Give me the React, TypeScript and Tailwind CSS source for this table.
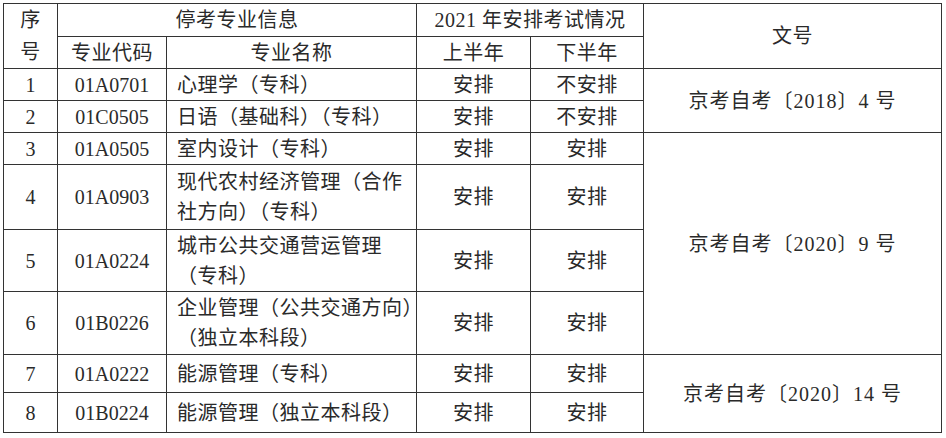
import React from "react";

type Row = {
  no: string;
  code: string;
  name: React.ReactNode;
  first: string;
  second: string;
  h: string;
};

const rows: Row[] = [
  { no: "1", code: "01A0701", name: "心理学（专科）", first: "安排", second: "不安排", h: "h-[32px]" },
  { no: "2", code: "01C0505", name: "日语（基础科）（专科）", first: "安排", second: "不安排", h: "h-[32px]" },
  { no: "3", code: "01A0505", name: "室内设计（专科）", first: "安排", second: "安排", h: "h-[32px]" },
  {
    no: "4",
    code: "01A0903",
    name: (
      <>
        现代农村经济管理（合作
        <br />
        社方向）（专科）
      </>
    ),
    first: "安排",
    second: "安排",
    h: "h-[65px]",
  },
  {
    no: "5",
    code: "01A0224",
    name: (
      <>
        城市公共交通营运管理
        <br />
        （专科）
      </>
    ),
    first: "安排",
    second: "安排",
    h: "h-[62px]",
  },
  {
    no: "6",
    code: "01B0226",
    name: (
      <>
        企业管理（公共交通方向）
        <br />
        （独立本科段）
      </>
    ),
    first: "安排",
    second: "安排",
    h: "h-[63px]",
  },
  { no: "7", code: "01A0222", name: "能源管理（专科）", first: "安排", second: "安排", h: "h-[38px]" },
  { no: "8", code: "01B0224", name: "能源管理（独立本科段）", first: "安排", second: "安排", h: "h-[40px]" },
];

// 文号 cells merged over several rows: start index -> [text, span]
const docNo: Record<number, [string, number]> = {
  0: ["京考自考〔2018〕4 号", 2],
  2: ["京考自考〔2020〕9 号", 4],
  6: ["京考自考〔2020〕14 号", 2],
};

const cell = "border border-[#333] p-0 text-center align-middle leading-[28px]";

export default function App() {
  return (
    <div className="min-h-screen bg-white pl-[3px] pt-[3px] text-[20px] text-[#2a2a2a] [font-family:'Liberation_Serif','Noto_Sans_CJK_SC',serif]">
      <table className="w-[938px] table-fixed border-collapse tracking-[0.5px]">
        <colgroup>
          <col className="w-[54px]" />
          <col className="w-[109px]" />
          <col className="w-[250px]" />
          <col className="w-[114px]" />
          <col className="w-[113px]" />
          <col className="w-[298px]" />
        </colgroup>
        <thead>
          <tr className="h-[33px]">
            <th rowSpan={2} className={`${cell} font-normal !leading-[32px]`}>
              序<br />号
            </th>
            <th colSpan={2} className={`${cell} font-normal`}>
              停考专业信息
            </th>
            <th colSpan={2} className={`${cell} font-normal`}>
              2021 年安排考试情况
            </th>
            <th rowSpan={2} className={`${cell} font-normal`}>
              文号
            </th>
          </tr>
          <tr className="h-[32px]">
            <th className={`${cell} font-normal`}>专业代码</th>
            <th className={`${cell} font-normal`}>专业名称</th>
            <th className={`${cell} font-normal`}>上半年</th>
            <th className={`${cell} font-normal`}>下半年</th>
          </tr>
        </thead>
        <tbody>
          {rows.map((r, i) => (
            <tr key={r.no} className={r.h}>
              <td className={`${cell} tracking-normal`}>{r.no}</td>
              <td className={`${cell} tracking-normal`}>{r.code}</td>
              <td className="whitespace-nowrap border border-[#333] p-0 pl-[10px] text-left align-middle leading-[30px]">
                {r.name}
              </td>
              <td className={cell}>{r.first}</td>
              <td className={cell}>{r.second}</td>
              {docNo[i] && (
                <td rowSpan={docNo[i][1]} className={`${cell} whitespace-nowrap tracking-[1px]`}>
                  {docNo[i][0]}
                </td>
              )}
            </tr>
          ))}
        </tbody>
      </table>
    </div>
  );
}
